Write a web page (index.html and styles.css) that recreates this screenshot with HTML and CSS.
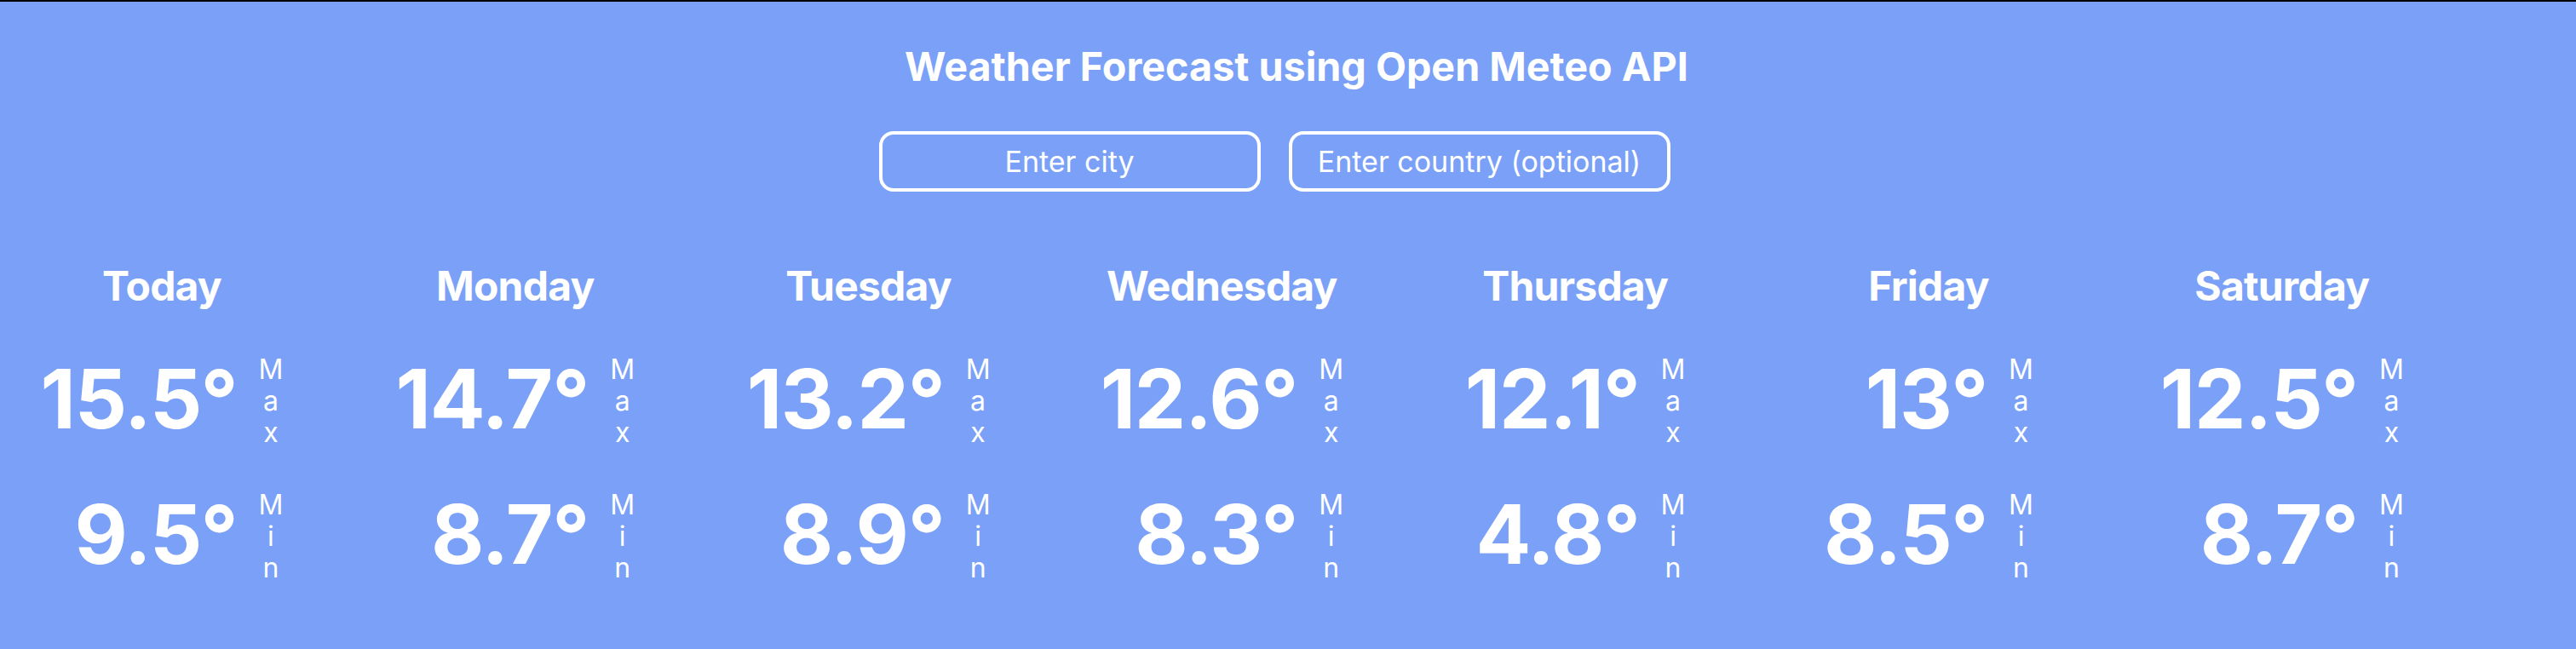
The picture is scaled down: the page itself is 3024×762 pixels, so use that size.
FILE: index.html
```html
<!DOCTYPE html>
<html lang="en">
<head>
<meta charset="utf-8">
<title>Weather Forecast</title>
<link rel="stylesheet" href="styles.css">
</head>
<body>
<div class="page">
  <h1 class="title">Weather Forecast using Open Meteo API</h1>
  <div class="search">
    <input class="field" type="text" placeholder="Enter city">
    <input class="field" type="text" placeholder="Enter country (optional)">
  </div>
  <div class="days">
    <div class="day">
      <div class="name">Today</div>
      <div class="temps">
        <div class="row"><span class="num">15.5°</span><span class="lbl">M a x</span></div>
        <div class="row"><span class="num">9.5°</span><span class="lbl">M i n</span></div>
      </div>
    </div>
    <div class="day">
      <div class="name">Monday</div>
      <div class="temps">
        <div class="row"><span class="num">14.7°</span><span class="lbl">M a x</span></div>
        <div class="row"><span class="num">8.7°</span><span class="lbl">M i n</span></div>
      </div>
    </div>
    <div class="day">
      <div class="name">Tuesday</div>
      <div class="temps">
        <div class="row"><span class="num">13.2°</span><span class="lbl">M a x</span></div>
        <div class="row"><span class="num">8.9°</span><span class="lbl">M i n</span></div>
      </div>
    </div>
    <div class="day">
      <div class="name">Wednesday</div>
      <div class="temps">
        <div class="row"><span class="num">12.6°</span><span class="lbl">M a x</span></div>
        <div class="row"><span class="num">8.3°</span><span class="lbl">M i n</span></div>
      </div>
    </div>
    <div class="day">
      <div class="name">Thursday</div>
      <div class="temps">
        <div class="row"><span class="num">12.1°</span><span class="lbl">M a x</span></div>
        <div class="row"><span class="num">4.8°</span><span class="lbl">M i n</span></div>
      </div>
    </div>
    <div class="day">
      <div class="name">Friday</div>
      <div class="temps">
        <div class="row"><span class="num">13°</span><span class="lbl">M a x</span></div>
        <div class="row"><span class="num">8.5°</span><span class="lbl">M i n</span></div>
      </div>
    </div>
    <div class="day">
      <div class="name">Saturday</div>
      <div class="temps">
        <div class="row"><span class="num">12.5°</span><span class="lbl">M a x</span></div>
        <div class="row"><span class="num">8.7°</span><span class="lbl">M i n</span></div>
      </div>
    </div>
  </div>
</div>
</body>
</html>
```

FILE: styles.css
```css
html, body {
  margin: 0;
  padding: 0;
}
body {
  background: #7aa1f7;
  border-top: 2px solid #000;
  min-height: 760px;
  font-family: Inter, "Noto Sans", sans-serif;
  color: #fff;
}
.page {
  display: flex;
  flex-direction: column;
}
.title {
  margin: 53px 0 0 0;
  padding-left: 20px;
  text-align: center;
  font-size: 46.7px;
  font-weight: 700;
  line-height: 1;
}
.search {
  margin-top: 52px;
  display: flex;
  justify-content: center;
  gap: 33px;
  padding-right: 32px;
}
.field {
  box-sizing: border-box;
  width: 448px;
  height: 71px;
  border: 4px solid #fff;
  border-radius: 17px;
  background: transparent;
  color: #fff;
  font-family: Inter, "Noto Sans", sans-serif;
  font-size: 34px;
  font-weight: 400;
  text-align: center;
  padding: 0 10px;
  outline: none;
}
.field::placeholder {
  color: #fff;
  opacity: 1;
}
.days {
  margin-top: 87px;
  display: flex;
  gap: 64.8px;
  padding-left: 15px;
}
.day {
  flex: 0 0 350px;
  display: flex;
  flex-direction: column;
  align-items: center;
}
.name {
  font-size: 48px;
  font-weight: 700;
  line-height: 1;
  letter-spacing: -0.8px;
}
.temps {
  margin-top: 60px;
  display: flex;
  flex-direction: column;
  align-items: flex-end;
  gap: 53px;
}
.row {
  display: flex;
  align-items: flex-start;
  gap: 25px;
}
.num {
  font-size: 96px;
  font-weight: 700;
  line-height: 1;
  letter-spacing: -1.2px;
}
.lbl {
  width: min-content;
  margin-top: -5px;
  font-size: 32px;
  font-weight: 400;
  line-height: 37px;
  text-align: center;
}
```
